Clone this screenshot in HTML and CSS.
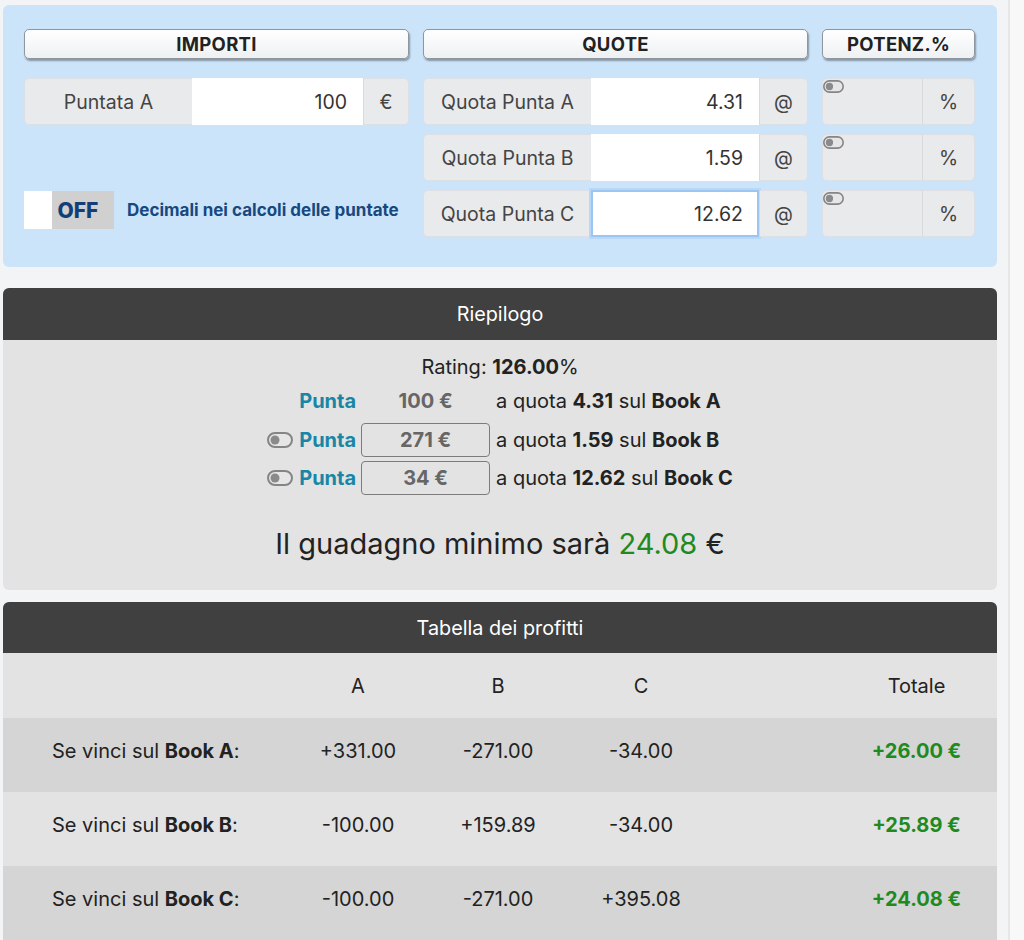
FILE: index.html
```html
<!DOCTYPE html>
<html>
  <head>
    <title>Calcolatore Surebet</title>
    <link rel="stylesheet" href="styles.css">
  </head>
  <body>
    <div class="page">
      <div class="inputs">
        <div class="col-head">IMPORTI</div>
        <div class="col-head">QUOTE</div>
        <div class="col-head">POTENZ.%</div>

        <div class="group">
          <span class="label">Puntata A</span>
          <span class="field">100</span>
          <span class="addon">€</span>
        </div>
        <div class="group">
          <span class="label">Quota Punta A</span>
          <span class="field">4.31</span>
          <span class="addon wide">@</span>
        </div>
        <div class="group">
          <span class="boost">
            <svg class="switch small" viewBox="0 0 26 16"><rect x="1" y="1" width="24" height="14" rx="7"/><circle cx="8" cy="8" r="4.5"/></svg>
          </span>
          <span class="addon pct">%</span>
        </div>

        <div></div>
        <div class="group">
          <span class="label">Quota Punta B</span>
          <span class="field">1.59</span>
          <span class="addon wide">@</span>
        </div>
        <div class="group">
          <span class="boost">
            <svg class="switch small" viewBox="0 0 26 16"><rect x="1" y="1" width="24" height="14" rx="7"/><circle cx="8" cy="8" r="4.5"/></svg>
          </span>
          <span class="addon pct">%</span>
        </div>

        <div class="decimals">
          <span class="off-toggle"><span class="knob"></span><span class="off">OFF</span></span>
          <span class="decimals-text">Decimali nei calcoli delle puntate</span>
        </div>
        <div class="group">
          <span class="label">Quota Punta C</span>
          <span class="field focused">12.62</span>
          <span class="addon wide">@</span>
        </div>
        <div class="group">
          <span class="boost">
            <svg class="switch small" viewBox="0 0 26 16"><rect x="1" y="1" width="24" height="14" rx="7"/><circle cx="8" cy="8" r="4.5"/></svg>
          </span>
          <span class="addon pct">%</span>
        </div>
      </div>

      <div class="card">
        <div class="card-head">Riepilogo</div>
        <div class="card-body summary">
          <div class="rating">Rating: <b>126.00</b>%</div>
          <div class="bets">
            <span></span>
            <span class="punta">Punta</span>
            <span class="amount">100 €</span>
            <span class="desc">a quota <b>4.31</b> sul <b>Book A</b></span>

            <svg class="switch" viewBox="0 0 26 16"><rect x="1" y="1" width="24" height="14" rx="7"/><circle cx="8" cy="8" r="4.5"/></svg>
            <span class="punta">Punta</span>
            <span class="amount boxed">271 €</span>
            <span class="desc">a quota <b>1.59</b> sul <b>Book B</b></span>

            <svg class="switch" viewBox="0 0 26 16"><rect x="1" y="1" width="24" height="14" rx="7"/><circle cx="8" cy="8" r="4.5"/></svg>
            <span class="punta">Punta</span>
            <span class="amount boxed">34 €</span>
            <span class="desc">a quota <b>12.62</b> sul <b>Book C</b></span>
          </div>
          <div class="result">Il guadagno minimo sarà <span class="green">24.08</span> €</div>
        </div>
      </div>

      <div class="card profits">
        <div class="card-head">Tabella dei profitti</div>
        <table class="profit-table">
          <colgroup>
            <col class="c-label">
            <col class="c-a">
            <col class="c-b">
            <col class="c-c">
            <col class="c-gap">
            <col class="c-tot">
          </colgroup>
          <tr class="head-row">
            <td></td>
            <td>A</td>
            <td>B</td>
            <td>C</td>
            <td></td>
            <td>Totale</td>
          </tr>
          <tr class="dark">
            <td class="who">Se vinci sul <b>Book A</b>:</td>
            <td>+331.00</td>
            <td>-271.00</td>
            <td>-34.00</td>
            <td></td>
            <td class="total">+26.00 €</td>
          </tr>
          <tr>
            <td class="who">Se vinci sul <b>Book B</b>:</td>
            <td>-100.00</td>
            <td>+159.89</td>
            <td>-34.00</td>
            <td></td>
            <td class="total">+25.89 €</td>
          </tr>
          <tr class="dark">
            <td class="who">Se vinci sul <b>Book C</b>:</td>
            <td>-100.00</td>
            <td>-271.00</td>
            <td>+395.08</td>
            <td></td>
            <td class="total">+24.08 €</td>
          </tr>
        </table>
      </div>
    </div>
  </body>
</html>
```

FILE: styles.css
```css
body {
  margin: 0;
  background-color: #f8f8f9;
  font-family: Inter, "Liberation Sans", sans-serif;
  color: #222;
}
.page {
  width: 1010px;
  min-height: 940px;
  padding: 5px 0 0 3px;
  box-sizing: border-box;
  background-color: #f3f4f6;
  border-right: 2px solid #e6e7e9;
}

/* top form */
.inputs {
  width: 994px;
  height: 262px;
  box-sizing: border-box;
  background-color: #cce4fa;
  border-radius: 6px;
  padding: 24px 21px 0 21px;
  display: grid;
  grid-template-columns: 385px 385px 153px;
  grid-template-rows: 40px 47px 47px 47px;
  column-gap: 14px;
  row-gap: 9px;
}
.col-head {
  height: 30px;
  box-sizing: border-box;
  background: linear-gradient(#ffffff, #eef0f2);
  border: 1px solid #8e96a0;
  border-radius: 5px;
  box-shadow: 1px 2px 2px rgba(0, 0, 0, 0.35);
  font-weight: bold;
  font-size: 18.5px;
  display: flex;
  align-items: center;
  justify-content: center;
  letter-spacing: 0.3px;
}
.group {
  display: flex;
  border-radius: 5px;
  overflow: hidden;
  font-size: 19.5px;
  color: #444;
}
.label {
  width: 167px;
  background-color: #e9eaec;
  border: 1px solid #dcdfe3;
  border-right: none;
  border-radius: 5px 0 0 5px;
  display: flex;
  align-items: center;
  justify-content: center;
}
.field {
  flex: 1;
  background-color: #fff;
  display: flex;
  align-items: center;
  justify-content: flex-end;
  padding-right: 16px;
  color: #333;
}
.field.focused {
  border: 2px solid #9cc6f2;
  box-shadow: 0 0 0 2px #b9d8f7;
  padding-right: 14px;
}
.group:has(.focused) {
  overflow: visible;
}
.addon {
  width: 46px;
  background-color: #e9eaec;
  border: 1px solid #dcdfe3;
  border-left: 1px solid #d8dadd;
  border-radius: 0 5px 5px 0;
  display: flex;
  align-items: center;
  justify-content: center;
  box-sizing: border-box;
}
.addon.wide {
  width: 49px;
}
.addon.pct {
  width: 53px;
}
.boost {
  flex: 1;
  background-color: #e9eaec;
  border: 1px solid #dcdfe3;
  border-right: none;
  border-radius: 5px 0 0 5px;
}
.switch {
  width: 26px;
  height: 16px;
}
.switch rect {
  fill: #e6e6e6;
  stroke: #858585;
  stroke-width: 2;
}
.switch circle {
  fill: #8a8a8a;
}
.switch.small {
  display: block;
  width: 21px;
  height: 13px;
  margin: 1px 0 0 0;
}

.decimals {
  display: flex;
  align-items: center;
  align-self: start;
  gap: 13px;
  margin-top: 1px;
}
.off-toggle {
  display: flex;
  height: 38px;
  width: 90px;
  background-color: #d0d0d0;
}
.knob {
  width: 28px;
  background-color: #fff;
}
.off {
  flex: 1;
  display: flex;
  align-items: center;
  justify-content: center;
  font-weight: 800;
  font-size: 21px;
  color: #123f78;
  padding-right: 10px;
}
.decimals-text {
  font-weight: bold;
  font-size: 17px;
  color: #17487f;
}

/* dark-headed cards */
.card {
  width: 994px;
  margin-top: 21px;
  background-color: #e3e3e3;
  border-radius: 6px;
  overflow: hidden;
}
.card-head {
  height: 52px;
  background-color: #404040;
  color: #fff;
  font-size: 19.8px;
  display: flex;
  align-items: center;
  justify-content: center;
}
.summary {
  height: 250px;
  box-sizing: border-box;
  padding-top: 14px;
  display: flex;
  flex-direction: column;
  align-items: center;
}
.rating {
  font-size: 20px;
  line-height: 26px;
}
.bets {
  display: grid;
  grid-template-columns: 26px auto 129px auto;
  grid-auto-rows: 38.5px;
  align-items: center;
  column-gap: 5px;
  margin-top: 2px;
  font-size: 20px;
}
.punta {
  color: #1a86a6;
  font-weight: bold;
  margin-left: 1px;
}
.amount {
  height: 34px;
  box-sizing: border-box;
  display: flex;
  align-items: center;
  justify-content: center;
  font-weight: bold;
  color: #666;
}
.amount.boxed {
  border: 1px solid #7c7c7c;
  border-radius: 4px;
}
.desc {
  color: #222;
  margin-left: 1px;
}
.result {
  margin-top: 28px;
  font-size: 29px;
  color: #222;
}
.green {
  color: #1f8a1f;
}

/* profit table */
.profits {
  margin-top: 12px;
  border-radius: 6px 6px 0 0;
}
.profits .card-head {
  height: 51px;
}
.profit-table {
  width: 994px;
  border-collapse: collapse;
  table-layout: fixed;
  font-size: 20px;
}
.c-label { width: 285px; }
.c-a { width: 140px; }
.c-b { width: 140px; }
.c-c { width: 146px; }
.c-gap { width: 122px; }
.c-tot { width: 161px; }
.profit-table td {
  text-align: center;
  padding: 0 0 9px 0;
  height: 65px;
}
.head-row td {
  height: 65px;
  padding: 0;
}
.profit-table tr.dark {
  background-color: #d5d5d5;
}
.profit-table td.who {
  text-align: left;
  padding-left: 49px;
}
.profit-table td.total {
  font-weight: bold;
  color: #1f8a1f;
}
```
